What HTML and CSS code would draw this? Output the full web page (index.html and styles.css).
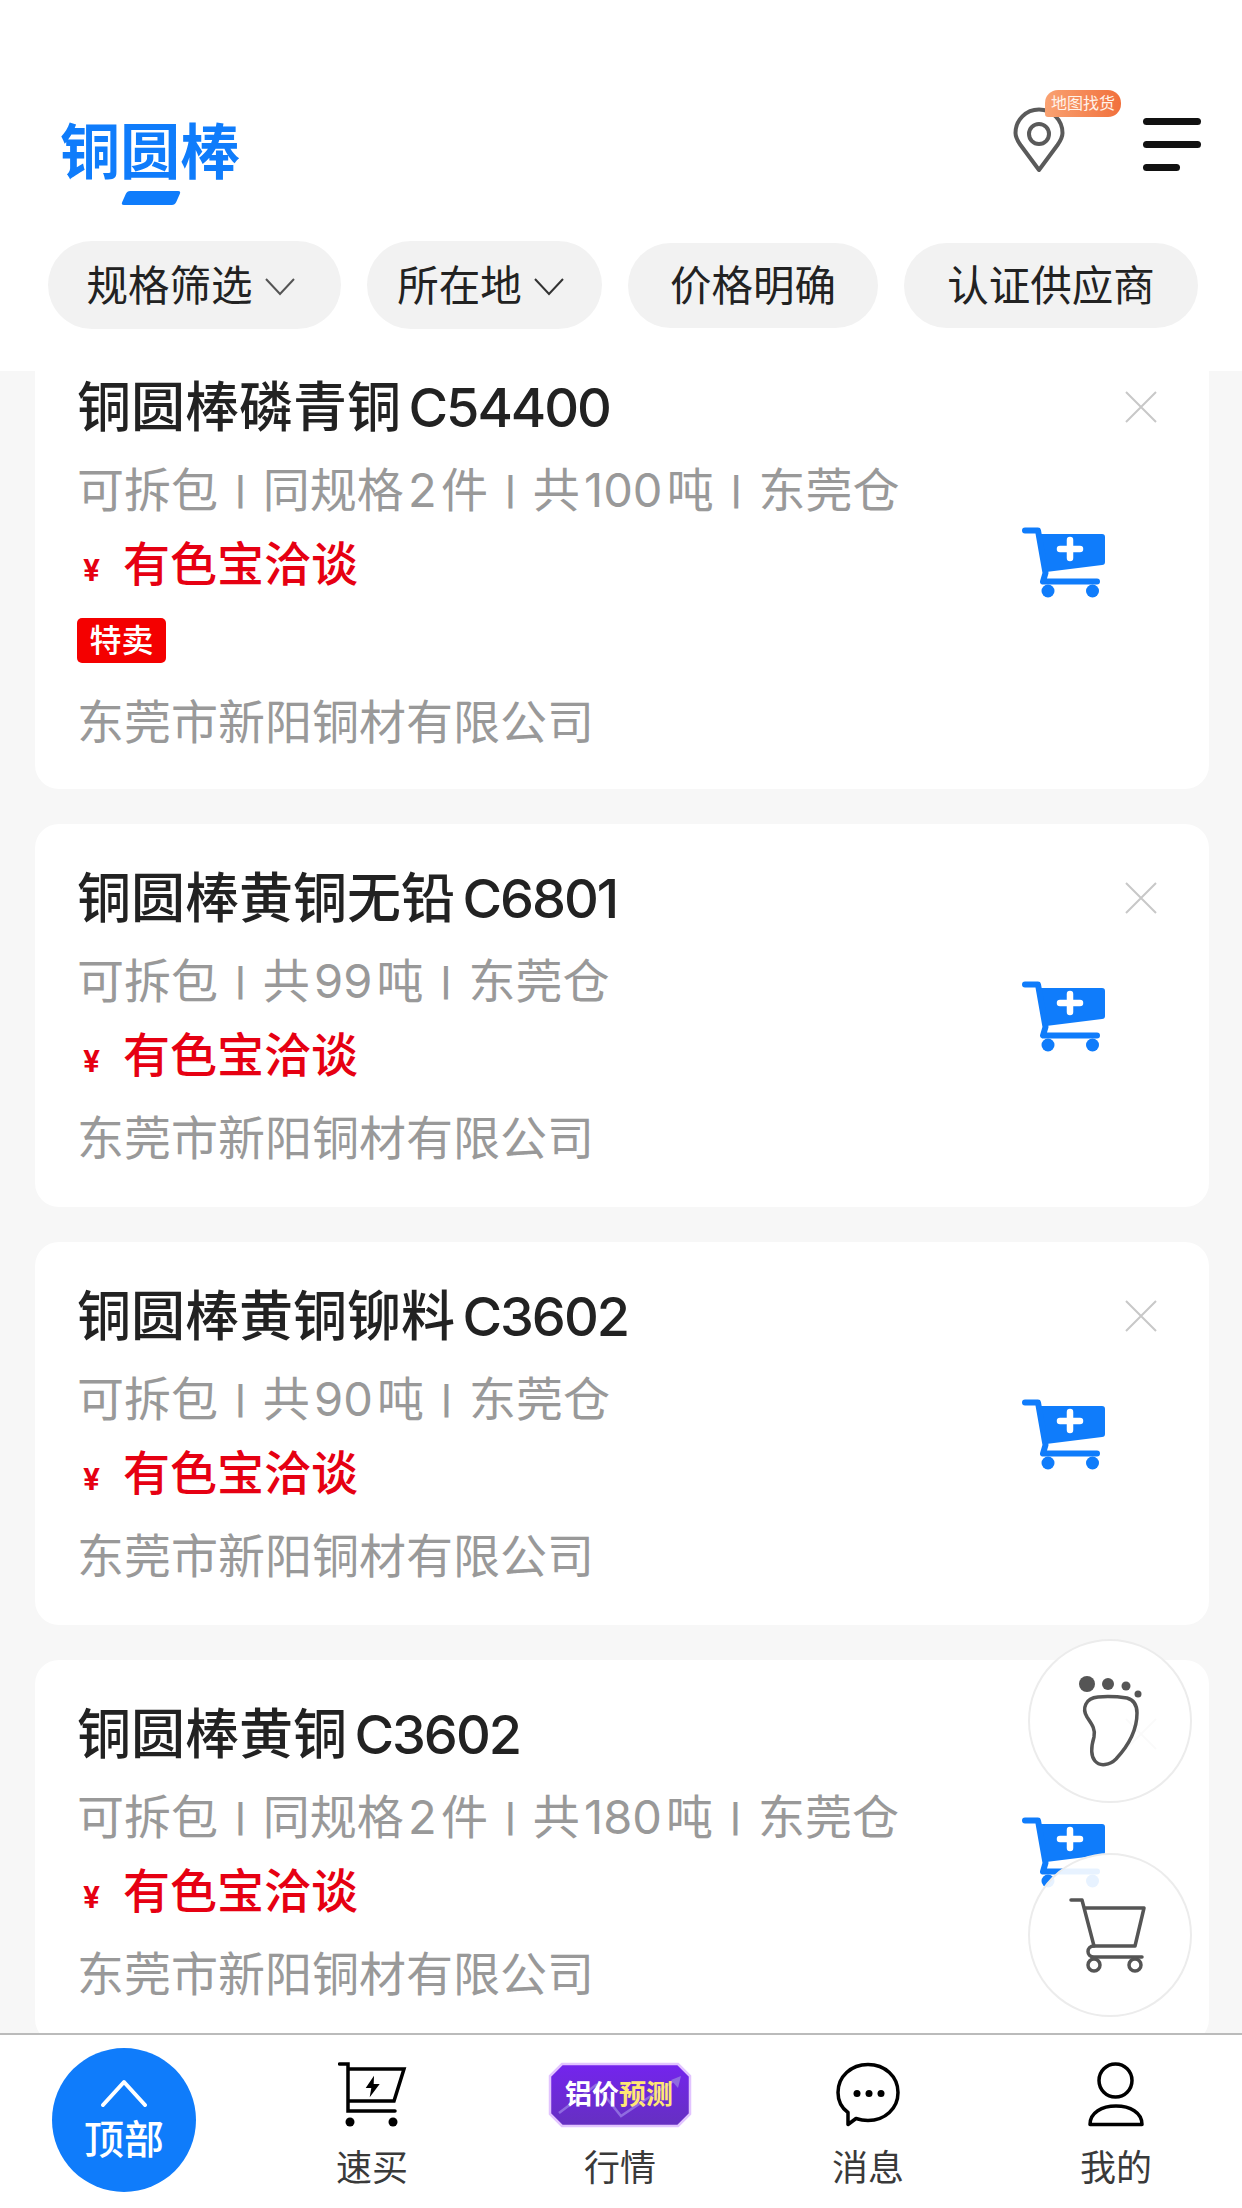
FILE: index.html
```html
<!DOCTYPE html>
<html lang="zh-CN">
<head>
<meta charset="utf-8">
<title>铜圆棒</title>
<link rel="stylesheet" href="styles.css">
</head>
<body>
<div class="app">
  <header class="header">
    <div class="top-row">
      <div class="brand">
        <h1 class="brand-title">铜圆棒</h1>
        <div class="brand-bar"></div>
      </div>
      <div class="top-actions">
        <div class="map-find">
          <svg class="pin" viewBox="0 0 52 66" width="52" height="66"><path d="M26 63 L7.500 38 C4 33 2.500 30 2.500 26 A23.500 23.500 0 0 1 49.500 26 C49.500 30 48 33 44.500 38 Z" fill="none" stroke="#5a5a5a" stroke-width="4" stroke-linejoin="round"/><circle cx="26" cy="27" r="10" fill="none" stroke="#5a5a5a" stroke-width="4"/></svg>
          <span class="map-badge">地图找货</span>
        </div>
        <div class="menu"><i class="menu-line"></i><i class="menu-line"></i><i class="menu-line menu-line-short"></i></div>
      </div>
    </div>
    <div class="chips">
      <div class="chip chip-select"><span>规格筛选</span><svg viewBox="0 0 30 18" width="30" height="18"><path d="M1 1 L15 16 L29 1" fill="none" stroke="#555" stroke-width="2"/></svg></div>
      <div class="chip chip-select"><span>所在地</span><svg viewBox="0 0 30 18" width="30" height="18"><path d="M1 1 L15 16 L29 1" fill="none" stroke="#333" stroke-width="2"/></svg></div>
      <div class="chip">价格明确</div>
      <div class="chip">认证供应商</div>
    </div>
  </header>

  <main class="list">
    <article class="card card-first">
      <div class="card-body">
        <h2 class="card-title">铜圆棒磷青铜 <span class="code">C54400</span></h2>
        <p class="card-sub">可拆包 <span class="sep">|</span> 同规格 2 件 <span class="sep">|</span> 共 100 吨 <span class="sep">|</span> 东莞仓</p>
        <p class="card-price"><span class="yen">¥</span>有色宝洽谈</p>
        <div class="tag">特卖</div>
        <p class="card-company">东莞市新阳铜材有限公司</p>
      </div>
      <svg class="add-cart" viewBox="0 0 84 71" width="84" height="71"><use href="#cart-add"/></svg>
      <svg class="close" viewBox="0 0 32 32" width="32" height="32"><use href="#close-x"/></svg>
    </article>

    <article class="card">
      <div class="card-body">
        <h2 class="card-title">铜圆棒黄铜无铅 <span class="code">C6801</span></h2>
        <p class="card-sub">可拆包 <span class="sep">|</span> 共 99 吨 <span class="sep">|</span> 东莞仓</p>
        <p class="card-price"><span class="yen">¥</span>有色宝洽谈</p>
        <p class="card-company">东莞市新阳铜材有限公司</p>
      </div>
      <svg class="add-cart" viewBox="0 0 84 71" width="84" height="71"><use href="#cart-add"/></svg>
      <svg class="close" viewBox="0 0 32 32" width="32" height="32"><use href="#close-x"/></svg>
    </article>

    <article class="card">
      <div class="card-body">
        <h2 class="card-title">铜圆棒黄铜铆料 <span class="code">C3602</span></h2>
        <p class="card-sub">可拆包 <span class="sep">|</span> 共 90 吨 <span class="sep">|</span> 东莞仓</p>
        <p class="card-price"><span class="yen">¥</span>有色宝洽谈</p>
        <p class="card-company">东莞市新阳铜材有限公司</p>
      </div>
      <svg class="add-cart" viewBox="0 0 84 71" width="84" height="71"><use href="#cart-add"/></svg>
      <svg class="close" viewBox="0 0 32 32" width="32" height="32"><use href="#close-x"/></svg>
    </article>

    <article class="card">
      <div class="card-body">
        <h2 class="card-title">铜圆棒黄铜 <span class="code">C3602</span></h2>
        <p class="card-sub">可拆包 <span class="sep">|</span> 同规格 2 件 <span class="sep">|</span> 共 180 吨 <span class="sep">|</span> 东莞仓</p>
        <p class="card-price"><span class="yen">¥</span>有色宝洽谈</p>
        <p class="card-company">东莞市新阳铜材有限公司</p>
      </div>
      <svg class="add-cart" viewBox="0 0 84 71" width="84" height="71"><use href="#cart-add"/></svg>
      <svg class="close" viewBox="0 0 32 32" width="32" height="32"><use href="#close-x"/></svg>
    </article>
  </main>

  <div class="floats">
    <div class="float-btn">
      <svg viewBox="2 2 160 160" width="160" height="160">
        <circle cx="59" cy="45" r="8" fill="#555"/><circle cx="80" cy="45" r="6" fill="#555"/><circle cx="98" cy="47" r="4.500" fill="#555"/><circle cx="110" cy="55" r="3.500" fill="#555"/>
        <path d="M70 58 C82 57 92 58 99 59 C106 61 109 66 109 74 C109 90 101 106 88 120 C82 126 72 128 67 122 C62 116 63 108 66 98 C68 90 63 84 59 78 C54 70 57 59 70 58 Z" fill="none" stroke="#555" stroke-width="3.500"/>
      </svg>
    </div>
    <div class="float-btn">
      <svg viewBox="2 2 160 160" width="160" height="160" fill="none" stroke="#555" stroke-width="3.500" stroke-linejoin="round" stroke-linecap="round">
        <path d="M43 47 H54 L66 93 H107 L116 55 H57"/>
        <path d="M66 93 C58 93 58 104 66 104 H114"/>
        <circle cx="66" cy="112" r="6"/><circle cx="107" cy="112" r="6"/>
      </svg>
    </div>
  </div>

  <nav class="tabbar">
    <div class="tab">
      <div class="top-btn">
        <svg viewBox="0 0 46 28" width="46" height="28"><path d="M2 26 L23 3 L44 26" fill="none" stroke="#fff" stroke-width="4" stroke-linecap="round" stroke-linejoin="round"/></svg>
        <span>顶部</span>
      </div>
    </div>
    <div class="tab">
      <svg class="tab-icon" viewBox="0 0 69 65" width="69" height="65">
        <path d="M1.500 2 H10 V49 H57" fill="none" stroke="#000" stroke-width="3.500" stroke-linecap="round"/>
        <path d="M10 7 H66 L56 39 H10" fill="none" stroke="#000" stroke-width="3.500"/>
        <path d="M36 13.700 L27.700 26 H33.300 L31.700 35.300 L41.700 22 H35.700 Z" fill="#000"/>
        <circle cx="12" cy="60" r="4.500"/><circle cx="55" cy="60" r="4.500"/>
      </svg>
      <span class="tab-label">速买</span>
    </div>
    <div class="tab">
      <div class="forecast">
        <svg viewBox="0 0 144 66" width="144" height="66">
          <defs><linearGradient id="fc" x1="0" y1="0" x2="0" y2="1"><stop offset="0" stop-color="#7424ee"/><stop offset="1" stop-color="#6530c0"/></linearGradient></defs>
          <polygon points="14,2 130,2 142,14 142,52 130,64 14,64 2,52 2,14" fill="url(#fc)" stroke="#e2c4ff" stroke-width="2.500"/>
          <path d="M11 51 L48 23 L73 54 L127 18" fill="none" stroke="#8f6be0" stroke-width="2.500"/>
          <polygon points="133,14 123,18 130,26" fill="#8f6be0"/>
        </svg>
        <span class="forecast-text">铝价<em class="forecast-hot">预测</em></span>
      </div>
      <span class="tab-label">行情</span>
    </div>
    <div class="tab">
      <svg class="tab-icon" viewBox="0 0 64 64" width="64" height="64">
        <path d="M12 50 C5 45 2 38 2 30 C2 14 15 2 32 2 S62 14 62 30 S49 58 32 58 C27 58 23 57 20 56 L12 62 Z" fill="none" stroke="#000" stroke-width="3.500" stroke-linejoin="round"/>
        <circle cx="21" cy="31" r="3.500"/><circle cx="33" cy="31" r="3.500"/><circle cx="45" cy="31" r="3.500"/>
      </svg>
      <span class="tab-label">消息</span>
    </div>
    <div class="tab">
      <svg class="tab-icon" viewBox="0 0 56 64" width="56" height="64">
        <circle cx="27.500" cy="18" r="16.500" fill="none" stroke="#000" stroke-width="3.500"/>
        <path d="M2 62 C2 50 14 43.500 28 43.500 S54 50 54 62 Z" fill="none" stroke="#000" stroke-width="3.500" stroke-linejoin="round"/>
      </svg>
      <span class="tab-label">我的</span>
    </div>
  </nav>
</div>

<svg class="defs" width="0" height="0">
  <symbol id="cart-add" viewBox="0 0 84 71">
    <path d="M14 7 H80 A3 3 0 0 1 83 10 V35 A3 3 0 0 1 80 38 L24 45 Z" fill="#0f7cfb"/>
    <path d="M3 3.500 H16 L23.500 46 L21 54.500 H75" fill="none" stroke="#0f7cfb" stroke-width="6" stroke-linecap="round" stroke-linejoin="round"/>
    <circle cx="26" cy="64" r="6.500" fill="#0f7cfb"/><circle cx="70.500" cy="64" r="6.500" fill="#0f7cfb"/>
    <path d="M48 13 V31 M38 22 H58" stroke="#fff" stroke-width="6.500" stroke-linecap="round"/>
  </symbol>
  <symbol id="close-x" viewBox="0 0 32 32">
    <path d="M1 1 L31 31 M31 1 L1 31" stroke="#c8c8c8" stroke-width="2"/>
  </symbol>
</svg>
</body>
</html>
```
FILE: styles.css
```css
* { box-sizing: border-box; }
html, body { margin: 0; padding: 0; }
body {
  width: 1242px;
  font-family: "Inter", "Noto Sans CJK SC", sans-serif;
  background: #fff;
}
h1, h2, p { margin: 0; font-weight: 400; }
em { font-style: normal; }
.defs { position: absolute; }

.app {
  position: relative;
  width: 1242px;
  height: 2208px;
  display: flex;
  flex-direction: column;
  overflow: hidden;
}

/* header */
.header {
  flex: 0 0 371px;
  padding-top: 117px;
  background: #fff;
}
.top-row {
  display: flex;
  justify-content: space-between;
  align-items: flex-start;
  height: 124px;
  padding: 0 41px 0 60px;
}
.brand-title {
  font-size: 60px;
  line-height: 70px;
  font-weight: 700;
  color: #0f7cfb;
}
.brand-bar {
  width: 54px;
  height: 14px;
  margin: 4px 0 0 64px;
  background: #0f7cfb;
  border-radius: 3px;
  transform: skewX(-24deg);
}
.top-actions {
  display: flex;
  align-items: flex-start;
  gap: 78px;
}
.map-find {
  position: relative;
  width: 52px;
  margin-top: -10px;
}
.pin { display: block; }
.map-badge {
  position: absolute;
  left: 32px;
  top: -17px;
  width: 76px;
  height: 27px;
  border-radius: 13px 13px 13px 3px;
  background: linear-gradient(90deg, #f9a272, #f1703c);
  color: #fff3ea;
  font-size: 16px;
  line-height: 27px;
  text-align: center;
  white-space: nowrap;
}
.menu {
  display: flex;
  flex-direction: column;
  gap: 16px;
  width: 58px;
  padding-top: 1px;
}
.menu-line {
  display: block;
  height: 7px;
  border-radius: 4px;
  background: #111;
}
.menu-line-short { width: 37px; }

.chips {
  display: grid;
  grid-template-columns: 293px 235px 250px 294px;
  column-gap: 26px;
  align-items: center;
  height: 88px;
  padding-left: 48px;
}
.chip {
  display: flex;
  align-items: center;
  justify-content: center;
  gap: 12px;
  height: 85px;
  padding-top: 3px;
  border-radius: 44px;
  background: #f2f2f2;
  color: #222;
  font-size: 41.5px;
  line-height: 1;
}
.chip-select {
  height: 88px;
  padding-right: 8px;
}

/* list */
.list {
  flex: 1 1 0;
  min-height: 0;
  overflow: hidden;
  background: #f7f7f7;
  padding: 0 33px 0 35px;
}
.card {
  display: flex;
  height: 383px;
  margin-bottom: 35px;
  padding: 43px 0 0 42px;
  border-radius: 24px;
  background: #fff;
}
.card-first {
  height: 456px;
  margin-top: -38px;
}
.card-body { flex: 1 1 0; min-width: 0; }
.card-title {
  font-size: 54px;
  line-height: 64px;
  font-weight: 500;
  color: #222;
  word-spacing: -7px;
  white-space: nowrap;
}
.code { letter-spacing: -2px; }
.card-sub {
  margin-top: 18px;
  font-size: 47px;
  line-height: 64px;
  color: #999;
  word-spacing: -9px;
  white-space: nowrap;
}
.sep {
  font-size: 28px;
  font-weight: 700;
  vertical-align: 5px;
  padding: 0 13px;
}
.card-price {
  margin-top: 8px;
  font-size: 47px;
  line-height: 64px;
  font-weight: 500;
  color: #e60012;
  white-space: nowrap;
}
.yen {
  display: inline-block;
  width: 46px;
  padding-left: 6px;
  font-size: 30px;
  font-weight: 700;
}
.tag {
  width: 89px;
  height: 45px;
  margin-top: 16px;
  margin-bottom: -7px;
  border-radius: 5px;
  background: #f40000;
  color: #fff;
  font-size: 32px;
  line-height: 45px;
  font-weight: 500;
  text-align: center;
}
.card-first .card-company { margin-top: 34px; }
.card-company {
  margin-top: 13px;
  font-size: 47px;
  line-height: 64px;
  color: #999;
  white-space: nowrap;
}
.add-cart {
  flex: none;
  align-self: center;
  margin-top: -41px;
}
.close {
  flex: none;
  align-self: flex-start;
  margin: 15px 52px 0 19px;
}

/* floating buttons */
.floats {
  position: absolute;
  right: 50px;
  bottom: 191px;
  display: flex;
  flex-direction: column;
  gap: 50px;
}
.float-btn {
  display: flex;
  align-items: center;
  justify-content: center;
  width: 164px;
  height: 164px;
  border: 2px solid #ececec;
  border-radius: 50%;
  background: rgba(255, 255, 255, 0.9);
}

/* tab bar */
.tabbar {
  flex: 0 0 175px;
  display: grid;
  grid-template-columns: repeat(5, 248px);
  border-top: 2px solid #bbb;
  background: #fff;
}
.tab {
  display: flex;
  flex-direction: column;
  align-items: center;
  padding-top: 27px;
}
.tab-icon { display: block; height: 65px; }
.tab-label {
  margin-top: 17px;
  font-size: 36px;
  line-height: 48px;
  color: #3a3a3a;
}
.top-btn {
  display: flex;
  flex-direction: column;
  align-items: center;
  width: 144px;
  height: 144px;
  margin-top: -14px;
  padding-top: 31px;
  border-radius: 50%;
  background: #0f7cfb;
  color: #fff;
  font-size: 40px;
  line-height: 46px;
  font-weight: 500;
}
.top-btn svg { display: block; margin-bottom: 10px; }
.forecast {
  position: relative;
  width: 144px;
  height: 65px;
}
.forecast svg { display: block; }
.forecast-text {
  position: absolute;
  left: 17px;
  top: 15px;
  font-size: 27px;
  line-height: 36px;
  font-weight: 700;
  color: #fff;
  white-space: nowrap;
}
.forecast-hot { color: #ffe774; }
```
